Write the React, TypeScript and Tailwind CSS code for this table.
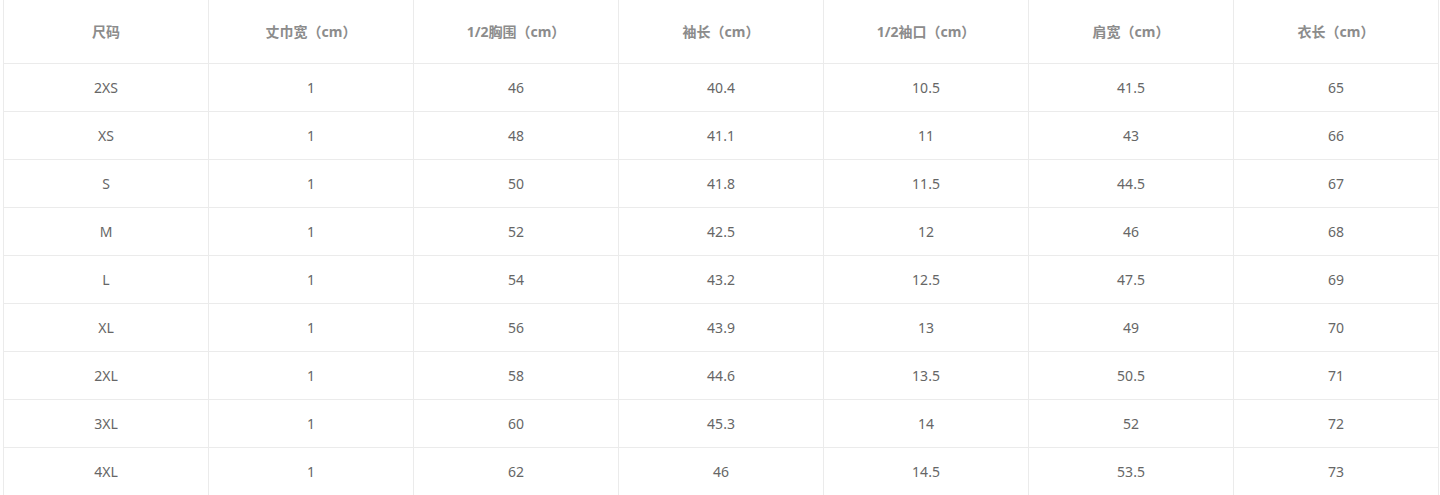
import React from "react";

const headers = ["尺码", "丈巾宽（cm）", "1/2胸围（cm）", "袖长（cm）", "1/2袖口（cm）", "肩宽（cm）", "衣长（cm）"];
const rows: string[][] = [
  ["2XS", "1", "46", "40.4", "10.5", "41.5", "65"],
  ["XS", "1", "48", "41.1", "11", "43", "66"],
  ["S", "1", "50", "41.8", "11.5", "44.5", "67"],
  ["M", "1", "52", "42.5", "12", "46", "68"],
  ["L", "1", "54", "43.2", "12.5", "47.5", "69"],
  ["XL", "1", "56", "43.9", "13", "49", "70"],
  ["2XL", "1", "58", "44.6", "13.5", "50.5", "71"],
  ["3XL", "1", "60", "45.3", "14", "52", "72"],
  ["4XL", "1", "62", "46", "14.5", "53.5", "73"],
];

export default function App() {
  return (
    <div
      className="w-[1440px] h-[495px] bg-white overflow-hidden pl-[3px]"
      style={{ fontFamily: '"Noto Sans", "Noto Sans CJK SC", sans-serif' }}
    >
      <div className="w-[1436px] border-l border-[#ebebeb]">
        <div className="grid grid-cols-[repeat(7,205px)] h-[64px] border-b border-[#ebebeb]">
          {headers.map((h, i) => (
            <div
              key={i}
              className="flex items-center justify-center border-r border-[#ebebeb] text-[14px] font-bold text-[#8c8c8c]"
            >
              {h}
            </div>
          ))}
        </div>
        {rows.map((r, ri) => (
          <div key={ri} className="grid grid-cols-[repeat(7,205px)] h-[48px] border-b border-[#ebebeb]">
            {r.map((c, ci) => (
              <div
                key={ci}
                className="flex items-center justify-center border-r border-[#ebebeb] text-[14px] text-[#666666]"
              >
                {c}
              </div>
            ))}
          </div>
        ))}
      </div>
    </div>
  );
}
